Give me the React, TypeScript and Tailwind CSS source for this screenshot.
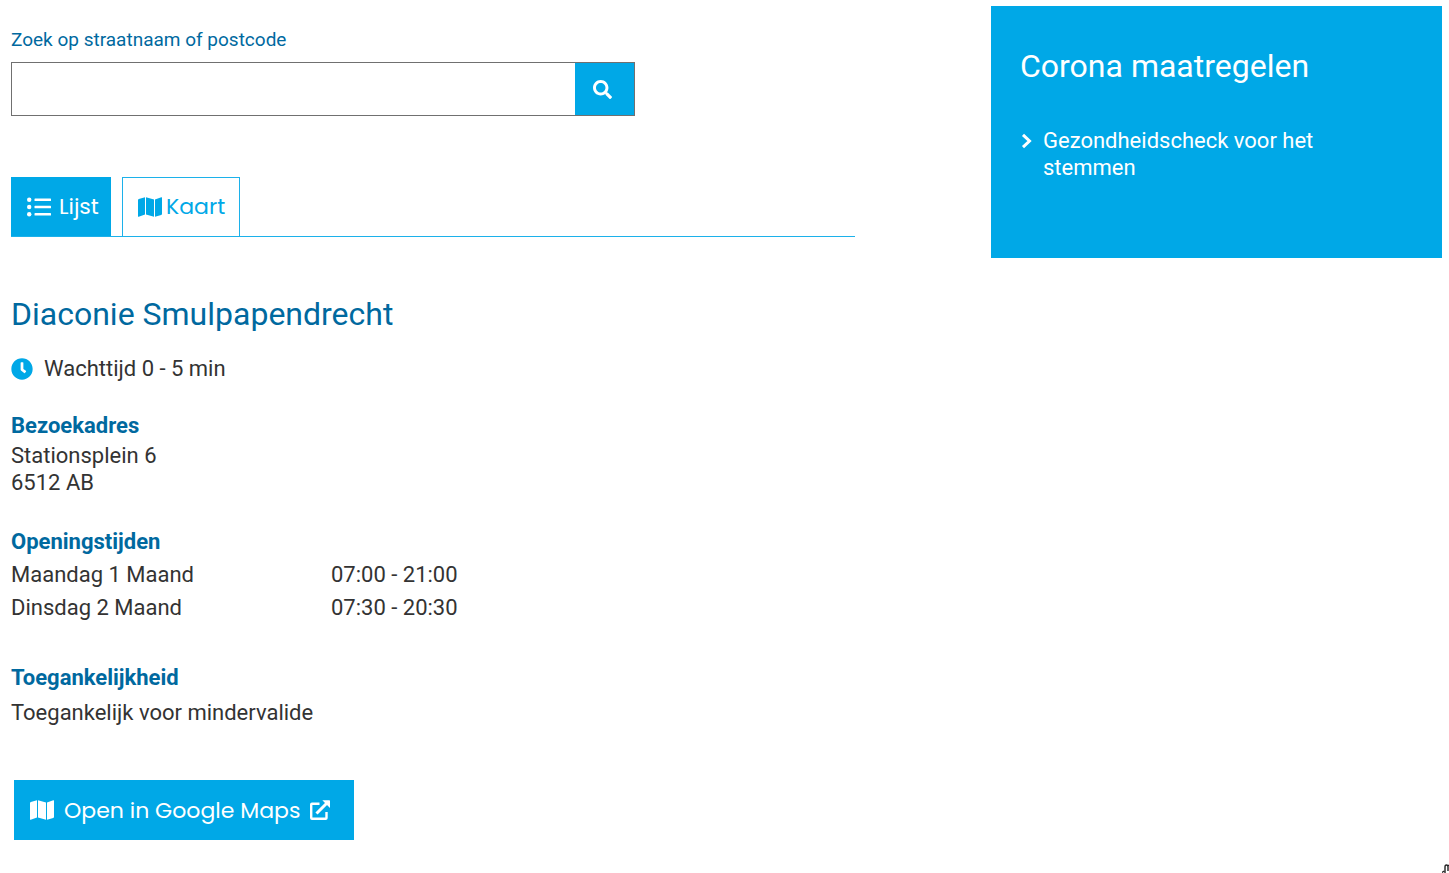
import React from 'react';
import { FaClock, FaSearch } from 'react-icons/fa';

const openingHours = [
  { day: 'Maandag 1 Maand', hours: '07:00 - 21:00' },
  { day: 'Dinsdag 2 Maand', hours: '07:30 - 20:30' },
];

const ListIcon: React.FC = () => (
  <svg className="h-5 w-6 shrink-0" viewBox="0 0 24 20" fill="currentColor" aria-hidden="true">
    <circle cx="2.2" cy="2.7" r="2.2" />
    <circle cx="2.2" cy="10" r="2.2" />
    <circle cx="2.2" cy="17.3" r="2.2" />
    <rect x="7.5" y="1.5" width="16.5" height="2.5" rx="0.6" />
    <rect x="7.5" y="8.8" width="16.5" height="2.5" rx="0.6" />
    <rect x="7.5" y="16.1" width="16.5" height="2.5" rx="0.6" />
  </svg>
);

const MapIcon: React.FC = () => (
  <svg className="h-5 w-6 shrink-0" viewBox="0 0 24 20" fill="currentColor" aria-hidden="true">
    <path d="M0 3.1Q0 2.3 .8 2L7 .3V17.4L.7 19.7Q0 19.9 0 19.2ZM8 .3L16 2.6V19.7L8 17.4ZM17 2.6L23.3.3Q24 .1 24 .8V17Q24 17.7 23.2 18L17 19.7Z" />
  </svg>
);

const ExternalIcon: React.FC = () => (
  <svg className="size-5 shrink-0" viewBox="0 0 20 20" fill="none" stroke="currentColor" strokeWidth="2.4" aria-hidden="true">
    <path d="M9.5 3.7H2Q1.2 3.7 1.2 4.5V18Q1.2 18.8 2 18.8H15.7Q16.5 18.8 16.5 18V12" />
    <path d="M6.5 13.5L17 3" strokeWidth="3" />
    <path d="M12.3.3H19.3Q20 .3 20 1V8Z" fill="currentColor" stroke="none" />
  </svg>
);

const ChevronIcon: React.FC = () => (
  <svg className="mt-1.5 h-4 w-3 shrink-0" viewBox="0 0 12 16" fill="none" stroke="currentColor" strokeWidth="3" aria-hidden="true">
    <path d="M3 1.8L9.5 8L3 14.2" />
  </svg>
);

const SearchForm: React.FC = () => (
  <form className="w-full max-w-[624px]" onSubmit={(e) => e.preventDefault()}>
    <label htmlFor="search" className="block text-[19px] leading-6 text-[#00699f]">
      Zoek op straatnaam of postcode
    </label>
    <div className="mt-2.5 flex h-[54px] border border-[#707070]">
      <input id="search" type="text" className="min-w-0 flex-1 bg-white px-3 text-[22px] outline-none" />
      <button type="submit" aria-label="Zoeken" className="flex w-[59px] items-center justify-center bg-[#00a8e7] pr-1 text-white">
        <FaSearch className="size-[19px]" />
      </button>
    </div>
  </form>
);

const Tabs: React.FC = () => (
  <div className="mt-[61px] flex gap-[11px] border-b border-[#1cb1ea] font-['Poppins','Inter',sans-serif] text-[22px] leading-8">
    <button type="button" className="flex h-[59px] w-[100px] items-center gap-2 bg-[#00a8e7] pl-4 text-white">
      <ListIcon />
      Lijst
    </button>
    <button type="button" className="flex h-[59px] w-[118px] items-center gap-1 border border-b-0 border-[#1cb1ea] pl-[15px] text-[#00a8e7]">
      <MapIcon />
      Kaart
    </button>
  </div>
);

const Location: React.FC = () => (
  <section className="text-[22px] leading-[27px] text-[#333]">
    <h1 className="mt-[57px] text-[32px] leading-10 text-[#00699f]">Diaconie Smulpapendrecht</h1>
    <p className="mt-[21px] flex items-center gap-[11px]">
      <FaClock className="size-[22px] text-[#00a8e7]" />
      Wachttijd 0 - 5 min
    </p>

    <h2 className="mt-[30px] font-bold text-[#00699f]">Bezoekadres</h2>
    <address className="mt-[3px] not-italic">
      Stationsplein 6
      <br />
      6512 AB
    </address>

    <h2 className="mt-8 font-bold text-[#00699f]">Openingstijden</h2>
    <table className="mt-[3px]">
      <tbody>
        {openingHours.map(({ day, hours }) => (
          <tr key={day} className="h-[33px]">
            <th scope="row" className="w-80 text-left font-normal">{day}</th>
            <td>{hours}</td>
          </tr>
        ))}
      </tbody>
    </table>

    <h2 className="mt-10 font-bold text-[#00699f]">Toegankelijkheid</h2>
    <p className="mt-2">Toegankelijk voor mindervalide</p>

    <a
      href="#maps"
      className="mt-[54px] ml-[3px] inline-flex h-[60px] w-[340px] items-center gap-2.5 bg-[#00a8e7] pl-4 font-['Poppins','Inter',sans-serif] text-white"
    >
      <MapIcon />
      Open in Google Maps
      <ExternalIcon />
    </a>
  </section>
);

const CoronaPanel: React.FC = () => (
  <aside className="h-[252px] bg-[#00a8e7] px-[29px] pt-10 text-white">
    <h2 className="text-[32px] leading-10">Corona maatregelen</h2>
    <a href="#gezondheidscheck" className="mt-[41px] flex max-w-[320px] gap-[11px] text-[22px] leading-[27px]">
      <ChevronIcon />
      Gezondheidscheck voor het stemmen
    </a>
  </aside>
);

const App: React.FC = () => (
  <div className="relative min-h-screen overflow-hidden bg-white pr-[7px] pl-[11px] font-['Roboto',sans-serif]">
    <div className="grid grid-cols-[844fr_451fr] items-start gap-[136px] pt-1.5">
      <main className="pt-[22px]">
        <SearchForm />
        <Tabs />
        <Location />
      </main>
      <CoronaPanel />
    </div>

    {/* Hand pointer peeking in at the corner */}
    <svg className="absolute right-0 bottom-0 h-[9px] w-[7px]" viewBox="0 0 7 9" fill="none" stroke="#222" aria-hidden="true">
      <path d="M0 8.5L2 7M3 9V3Q3 1 4.5 1T6 3V7M6 2L7 1" strokeWidth="1.4" />
    </svg>
  </div>
);

export default App;
